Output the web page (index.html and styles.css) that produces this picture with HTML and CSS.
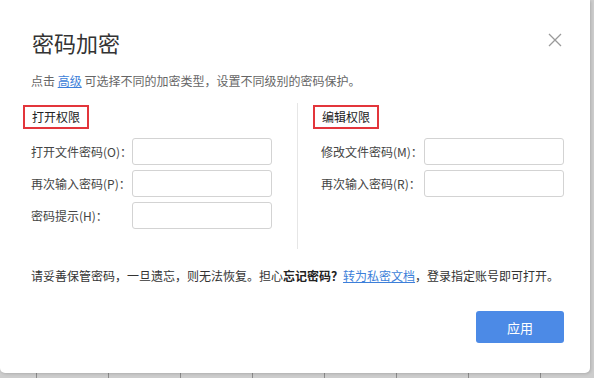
FILE: index.html
```html
<!DOCTYPE html>
<html lang="zh-CN">
<head>
    <meta charset="UTF-8">
    <meta name="viewport" content="width=device-width, initial-scale=1.0">
    <title>密码加密</title>
    <link rel="stylesheet" href="styles.css">
</head>
<body>
    <div class="dialog">
        <div class="dialog-header">
            <h1 class="dialog-title">密码加密</h1>
            <button class="close" type="button" aria-label="关闭">
                <svg width="14" height="14" viewBox="0 0 14 14">
                    <path d="M1 1 L13 13 M13 1 L1 13" stroke="#9a9a9a" stroke-width="1.3" fill="none" />
                </svg>
            </button>
        </div>
        <p class="hint">点击 <a href="#" class="link">高级</a> 可选择不同的加密类型，设置不同级别的密码保护。</p>

        <div class="sections">
            <div class="section section-open">
                <div class="section-title">打开权限</div>
                <div class="row">
                    <label class="label">打开文件密码(O)：</label>
                    <input class="field" type="password" />
                </div>
                <div class="row">
                    <label class="label">再次输入密码(P)：</label>
                    <input class="field" type="password" />
                </div>
                <div class="row">
                    <label class="label">密码提示(H)：</label>
                    <input class="field" type="text" />
                </div>
            </div>
            <div class="section section-edit">
                <div class="section-title">编辑权限</div>
                <div class="row">
                    <label class="label">修改文件密码(M)：</label>
                    <input class="field" type="password" />
                </div>
                <div class="row">
                    <label class="label">再次输入密码(R)：</label>
                    <input class="field" type="password" />
                </div>
            </div>
        </div>

        <p class="notice">请妥善保管密码，一旦遗忘，则无法恢复。担心<b>忘记密码？</b><a href="#" class="link">转为私密文档</a>，登录指定账号即可打开。</p>

        <div class="footer">
            <button class="btn-apply" type="button">应用</button>
        </div>
    </div>
</body>
</html>
```

FILE: styles.css
```css
body {
    margin: 0;
    width: 594px;
    height: 378px;
    overflow: hidden;
    font-family: "Noto Sans CJK SC", "Liberation Sans", sans-serif;
    color: #333;
    background-color: #cdcdcd;
    background-image: repeating-linear-gradient(to right, transparent 0, transparent 36px, #8c8c8c 36px, #8c8c8c 37px, transparent 37px, transparent 72px);
}

.dialog {
    box-sizing: border-box;
    width: 590px;
    height: 373px;
    padding: 26px 26px 0 23px;
    background: #fff;
    border-radius: 0 0 5px 5px;
    box-shadow: 1px 1px 3px rgba(0, 0, 0, 0.15);
}

.dialog-header {
    display: flex;
    justify-content: space-between;
    align-items: center;
    padding-left: 9px;
}

.dialog-title {
    margin: 0;
    font-size: 22px;
    font-weight: normal;
    line-height: 32px;
    color: #333;
}

.close {
    border: 0;
    padding: 0;
    margin: -4px 2px 0 0;
    background: none;
    width: 14px;
    height: 14px;
    cursor: pointer;
}

.hint {
    margin: 13px 0 0 8px;
    font-size: 12px;
    line-height: 20px;
    color: #666;
}

.link {
    color: #3d7fd9;
    text-decoration: underline;
}

.sections {
    display: flex;
    margin-top: 12px;
    height: 146px;
}

.section-open {
    flex-shrink: 0;
    width: 274px;
}

.section-edit {
    flex: 1;
    border-left: 1px solid #e6e6e6;
    padding-left: 15px;
}

.section-title {
    display: inline-block;
    border: 2px solid #e3353b;
    padding: 0 7px;
    font-size: 12px;
    line-height: 20px;
    color: #222;
}

.row {
    display: flex;
    align-items: center;
    margin-top: 5px;
    padding-left: 8px;
}

.section-title + .row {
    margin-top: 9px;
}

.label {
    flex-shrink: 0;
    width: 101px;
    white-space: nowrap;
    font-size: 12px;
    line-height: 20px;
    color: #444;
}

.section-edit .label {
    width: 103px;
}

.field {
    box-sizing: border-box;
    flex-shrink: 0;
    width: 140px;
    height: 27px;
    border: 1px solid #d3d3d3;
    border-radius: 3px;
    outline: none;
}

.notice {
    margin: 17px 0 0 8px;
    font-size: 12px;
    line-height: 20px;
    color: #333;
}

.notice b {
    color: #222;
}

.footer {
    display: flex;
    justify-content: flex-end;
    margin-top: 25px;
}

.btn-apply {
    width: 88px;
    height: 32px;
    border: 0;
    border-radius: 3px;
    background-color: #4c8ae6;
    color: #fff;
    font-family: inherit;
    font-size: 13px;
    cursor: pointer;
}
```
